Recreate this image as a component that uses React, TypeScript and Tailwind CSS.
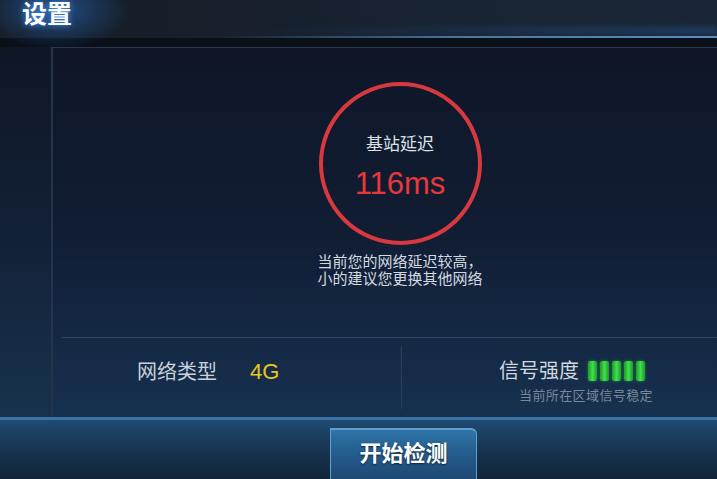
const FONT = 'font-["Liberation_Sans","Noto_Sans_CJK_SC",sans-serif]';

function SignalBars({ level = 5 }: { level?: number }) {
  return (
    <div className="flex gap-[3px]">
      {[0, 1, 2, 3, 4].map((i) => (
        <div
          key={i}
          className={
            i < level
              ? 'w-[9px] h-[20px] rounded-[2px] bg-gradient-to-r from-[#1f9a2a] via-[#3fe04c] to-[#1f9a2a] shadow-[0_0_3px_rgba(60,220,70,0.5)]'
              : 'w-[9px] h-[20px] rounded-[2px] bg-[#2a3a48]'
          }
        />
      ))}
    </div>
  );
}

export default function App() {
  return (
    <div
      className={`${FONT} w-[717px] h-[479px] overflow-hidden flex flex-col bg-[#111b29] select-none`}
    >
      {/* header */}
      <div className="relative h-[38px] shrink-0 bg-gradient-to-r from-[#151c24] via-[#182230] to-[#1a2638]">
        <div className="absolute left-[-20px] top-[-30px] w-[150px] h-[80px] rounded-full bg-[radial-gradient(closest-side,rgba(40,110,200,0.6),rgba(40,110,200,0))]" />
        <div className="absolute right-0 bottom-[3px] w-[65%] h-[9px] bg-[linear-gradient(to_right,rgba(35,80,130,0),rgba(35,80,130,0.45))] blur-[2px]" />
        <div className="absolute right-0 bottom-0 w-[70%] h-[2px] bg-gradient-to-r from-transparent via-[#46789f] to-[#5b8fc0]" />
        <div className="relative pl-[22px] pt-[1px] leading-[26px] text-[25px] font-bold text-white [text-shadow:0_0_6px_rgba(80,160,255,0.9)]">
          设置
        </div>
      </div>
      <div className="h-[9px] shrink-0 bg-[#0a0f18]" />

      {/* middle */}
      <div className="flex h-[370px] shrink-0">
        <div className="w-[53px] shrink-0 border-r-2 border-[#25344c] bg-gradient-to-b from-[#0f1726] via-[#122036] to-[#17324d]" />
        <div className="flex-1 flex flex-col border-t border-[#2c3752] bg-gradient-to-b from-[#0f1628] via-[#111d33] to-[#163150]">
          <div className="flex flex-col items-center pl-[30px] pt-[34px]">
            <div className="w-[163px] h-[163px] rounded-full border-4 border-[#d7393e] flex flex-col items-center">
              <div className="mt-[48px] text-[17px] leading-[22px] text-[#dde2e8]">基站延迟</div>
              <div className="mt-[11px] text-[31px] leading-[34px] text-[#e8383b]">116ms</div>
            </div>
            <div className="mt-[8px] text-[15px] leading-[17px] text-[#d3d9e0] text-left">
              <div>当前您的网络延迟较高，</div>
              <div>小的建议您更换其他网络</div>
            </div>
          </div>

          <div className="mt-auto ml-[9px] h-[80px] flex border-t border-[#2a4564]">
            <div className="w-[338px] flex items-start pt-[23px] pl-[75px]">
              <span className="text-[20px] leading-[22px] text-[#c9d1da]">网络类型</span>
              <span className="ml-[33px] text-[22px] leading-[22px] text-[#e9c41f]">4G</span>
            </div>
            <div className="w-[2px] my-[8px] bg-[#1c2c42] border-r border-[#2a4060]" />
            <div className="flex-1 flex flex-col items-end pt-[22px] pr-[64px]">
              <div className="flex items-center mr-[8px]">
                <span className="text-[20px] leading-[22px] text-[#d0d7df]">信号强度</span>
                <span className="ml-[9px]">
                  <SignalBars level={5} />
                </span>
              </div>
              <div className="mt-[6px] text-[13px] leading-[16px] tracking-[0.4px] text-[#7a8898]">
                当前所在区域信号稳定
              </div>
            </div>
          </div>
        </div>
      </div>

      {/* bottom bar */}
      <div className="flex-1 flex flex-col border-t-[3px] border-[#3a74a4] bg-gradient-to-b from-[#1f4a72] via-[#17334f] to-[#102236]">
        <div className="pl-[330px] pt-[8px]">
          <button className="relative w-[147px] h-[56px] border-t-2 border-x border-[#5fa0cf] rounded-tr-[6px] bg-gradient-to-b from-[#2f74a8] via-[#23598a] to-[#1b4670] text-[22px] leading-[26px] font-bold text-white pb-[6px] [text-shadow:0_1px_2px_rgba(0,0,0,0.6)]">
            开始检测
          </button>
        </div>
      </div>
    </div>
  );
}
